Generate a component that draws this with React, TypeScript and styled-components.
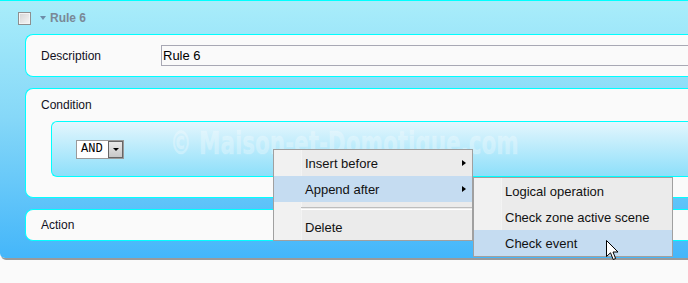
import React from "react";
import styled, { createGlobalStyle } from "styled-components";

const GlobalStyle = createGlobalStyle`
  html, body {
    margin: 0;
    padding: 0;
    background: #fafafa;
    overflow: hidden;
  }
  body {
    font-family: "Liberation Sans", Arial, sans-serif;
  }
`;

const Page = styled.div`
  position: relative;
  width: 688px;
  height: 283px;
`;

const Panel = styled.div`
  height: 257px;
  background: linear-gradient(#a9edfa 0%, #86d8f8 45%, #44b6fa 100%);
  border-top: 1px solid #00ffff;
  border-bottom-left-radius: 5px;
  box-shadow: 1px 2px 0 #9a9a9a;
  display: flex;
  flex-direction: column;
`;

const Header = styled.div`
  height: 33px;
  display: flex;
  align-items: flex-start;
  padding: 11px 0 0 18px;
  box-sizing: border-box;
`;

const CheckBox = styled.span`
  width: 11px;
  height: 11px;
  border: 1px solid #8e8f8f;
  background: linear-gradient(135deg, #d4d4d4, #f6f6f6);
  box-shadow: inset 0 0 0 1px #f4f4f4;
`;

const Caret = styled.span`
  margin: 4px 0 0 9px;
  width: 0;
  height: 0;
  border-left: 3px solid transparent;
  border-right: 3px solid transparent;
  border-top: 4px solid #6e8ca8;
`;

const RuleTitle = styled.span`
  margin-left: 4px;
  margin-top: -1px;
  font-size: 12px;
  font-weight: bold;
  color: #7a8896;
`;

const Cards = styled.div`
  display: flex;
  flex-direction: column;
  gap: 11px;
  padding-left: 25px;
`;

const Card = styled.div<{ $h: number }>`
  height: ${(p) => p.$h}px;
  box-sizing: border-box;
  background: #fafafa;
  border: 1px solid #00ffff;
  border-right: none;
  border-radius: 8px 0 0 8px;
  padding-left: 15px;
`;

const Row = styled.div<{ $h: number }>`
  height: ${(p) => p.$h}px;
  display: flex;
  align-items: center;
`;

const Label = styled.span`
  width: 120px;
  font-size: 12px;
  color: #111122;
`;

const TextInput = styled.div`
  flex: 1;
  height: 21px;
  box-sizing: border-box;
  border: 1px solid #a8a8b4;
  border-right: none;
  background: #fafafa;
  font-size: 13px;
  color: #000;
  padding-left: 1px;
  display: flex;
  align-items: center;
`;

const Inner = styled.div`
  margin: 0 0 0 10px;
  height: 56px;
  box-sizing: border-box;
  border: 1px solid #00ffff;
  border-right: none;
  border-radius: 6px 0 0 6px;
  background: linear-gradient(#e4f6fd, #8ddffa);
  padding: 18px 0 0 24px;
`;

const Select = styled.div`
  width: 48px;
  height: 19px;
  box-sizing: border-box;
  border: 1px solid #9a9a9a;
  background: #fff;
  display: flex;
`;

const SelectText = styled.span`
  flex: 1;
  font-family: "Liberation Mono", "Courier New", monospace;
  font-size: 12px;
  line-height: 17px;
  padding-left: 4px;
  color: #000;
`;

const SelectButton = styled.span`
  width: 15px;
  box-sizing: border-box;
  border: 1px solid #666;
  background: linear-gradient(#e8e8e8, #c8c8c8);
  display: flex;
  align-items: center;
  justify-content: center;
  &::after {
    content: "";
    border-left: 3px solid transparent;
    border-right: 3px solid transparent;
    border-top: 3px solid #000;
  }
`;

const Watermark = styled.div`
  position: absolute;
  left: 170px;
  top: 124px;
  font-family: "DejaVu Sans", sans-serif;
  font-weight: bold;
  font-size: 32px;
  color: rgba(255, 255, 255, 0.28);
  -webkit-text-stroke: 1.5px rgba(255, 255, 255, 0.1);
  white-space: nowrap;
  transform: scaleX(0.672);
  transform-origin: left top;
  pointer-events: none;
`;

const Menu = styled.div<{ $x: number; $y: number }>`
  position: absolute;
  left: ${(p) => p.$x}px;
  top: ${(p) => p.$y}px;
  width: 200px;
  box-sizing: border-box;
  border: 1px solid #a0a0a0;
  background: linear-gradient(90deg, #f1f1f1 26px, #e2e3e3 26px, #fcfcfc 27px, #ebebeb 28px);
  padding: 0;
`;

const Item = styled.div<{ $active?: boolean; $arrow?: boolean }>`
  position: relative;
  height: 26px;
  display: flex;
  align-items: center;
  padding-left: 31px;
  font-family: "Liberation Sans", Arial, sans-serif;
  font-size: 13px;
  color: #111;
  background: ${(p) => (p.$active ? "#c5dcf1" : "transparent")};
  &::after {
    content: "";
    display: ${(p) => (p.$arrow ? "block" : "none")};
    position: absolute;
    right: 6px;
    top: 10px;
    border-top: 3px solid transparent;
    border-bottom: 3px solid transparent;
    border-left: 4px solid #000;
  }
`;

const Separator = styled.div`
  height: 12px;
  display: flex;
  align-items: center;
  padding-left: 27px;
  &::after {
    content: "";
    flex: 1;
    height: 1px;
    border-top: 1px solid #bdbdbd;
    border-bottom: 1px solid #fff;
  }
`;

const Cursor = styled.svg`
  position: absolute;
  left: 606px;
  top: 240px;
`;

export default function App() {
  return (
    <Page>
      <GlobalStyle />
      <Panel>
        <Header>
          <CheckBox />
          <Caret />
          <RuleTitle>Rule 6</RuleTitle>
        </Header>
        <Cards>
          <Card $h={43}>
            <Row $h={41}>
              <Label>Description</Label>
              <TextInput>Rule 6</TextInput>
            </Row>
          </Card>
          <Card $h={110}>
            <Row $h={32}>
              <Label>Condition</Label>
            </Row>
            <Inner>
              <Select>
                <SelectText>AND</SelectText>
                <SelectButton />
              </Select>
            </Inner>
          </Card>
          <Card $h={32}>
            <Row $h={30}>
              <Label>Action</Label>
            </Row>
          </Card>
        </Cards>
      </Panel>

      <Watermark>© Maison-et-Domotique.com</Watermark>

      <Menu $x={273} $y={149}>
        <Item $arrow>Insert before</Item>
        <Item $arrow $active>Append after</Item>
        <Separator />
        <Item>Delete</Item>
      </Menu>

      <Menu $x={473} $y={177}>
        <Item>Logical operation</Item>
        <Item>Check zone active scene</Item>
        <Item $active>Check event</Item>
      </Menu>

      <Cursor width="13" height="21" viewBox="0 0 13 21">
        <path
          d="M0.5 0.5 L0.5 16.5 L4.5 12.8 L7.2 19.5 L9.6 18.5 L7 12 L12 12 Z"
          fill="#fff"
          stroke="#000"
          strokeWidth="1"
          strokeLinejoin="miter"
        />
      </Cursor>
    </Page>
  );
}
